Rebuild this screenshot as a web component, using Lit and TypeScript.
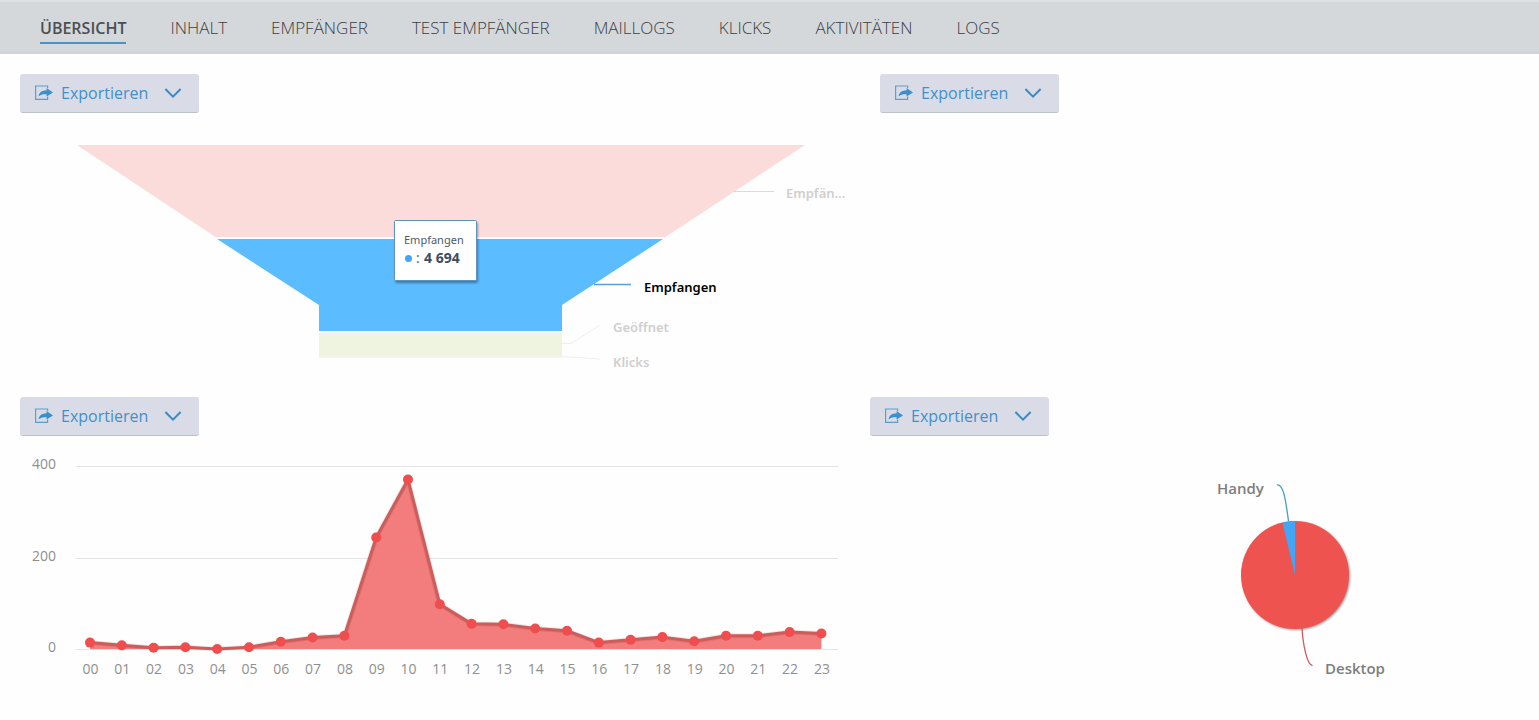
import { LitElement, html, svg, css } from "lit";
import { customElement, property } from "lit/decorators.js";

const TABS = [
  "ÜBERSICHT",
  "INHALT",
  "EMPFÄNGER",
  "TEST EMPFÄNGER",
  "MAILLOGS",
  "KLICKS",
  "AKTIVITÄTEN",
  "LOGS",
];

/** Opens per hour of the day, index = hour. */
const HOURLY = [
  14, 8, 3, 4, 0, 4, 16, 25, 29, 244, 371, 98, 55, 54, 45, 40, 14, 20, 26, 17, 29, 29, 37, 34,
];

@customElement("nav-tabs")
export class NavTabs extends LitElement {
  @property({ type: Number }) active = 0;

  static styles = css`
    :host {
      display: block;
    }
    .bar {
      display: flex;
      gap: 44px;
      box-sizing: border-box;
      height: 54px;
      padding: 14px 40px 0;
      background: #d4d8db;
      border-top: 2px solid #dbe1e4;
      border-bottom: 2px solid #d3d3d3;
    }
    .tab {
      height: 26px;
      line-height: 24px;
      font-size: 17px;
      font-weight: 300;
      color: #3c4044;
      text-decoration: none;
      white-space: nowrap;
    }
    .current {
      font-size: 16px;
      font-weight: 600;
      color: #4b4f53;
      border-bottom: 2px solid #4a92c6;
    }
  `;

  render() {
    return html`<nav class="bar">
      ${TABS.map(
        (t, i) => html`<a class="tab ${i === this.active ? "current" : ""}" href="#">${t}</a>`
      )}
    </nav>`;
  }
}

@customElement("export-button")
export class ExportButton extends LitElement {
  static styles = css`
    :host {
      display: block;
    }
    .button {
      display: flex;
      align-items: center;
      height: 39px;
      padding: 0 17px 0 15px;
      border: 0;
      border-bottom: 1px solid #bcc0c9;
      border-radius: 3px;
      background: #d9dce6;
      color: #4190cb;
      font: inherit;
      font-size: 16px;
      cursor: pointer;
    }
    .label {
      margin: 0 16px 0 8px;
    }
    .icon {
      display: block;
    }
  `;

  render() {
    return html`<button class="button" type="button">
      <svg class="icon" width="18" height="16" viewBox="0 0 18 16" fill="none">
        <path d="M12.6 3V1H0.6V14.4H12.6V11.4" stroke="#5a9fd2" stroke-width="1.2" />
        <path
          d="M3.6 11.2C4.2 7.4 6.8 5.4 11.6 5.3V3L18 7.4L11.6 11.4V9.2C8 9 5.6 9.6 3.6 11.2Z"
          fill="#3a8fcd"
        />
      </svg>
      <span class="label">Exportieren</span>
      <svg class="icon" width="18" height="12" viewBox="0 0 18 12" fill="none">
        <path d="M1.4 2L9 9.6L16.6 2" stroke="#3a8ac6" stroke-width="2" />
      </svg>
    </button>`;
  }
}

const chartStyles = css`
  :host {
    display: block;
  }
  .chart {
    display: block;
    width: 100%;
    height: auto;
  }
`;

@customElement("funnel-chart")
export class FunnelChart extends LitElement {
  static styles = [
    chartStyles,
    css`
      .label {
        font-family: "Noto Sans", "Open Sans", sans-serif;
        font-size: 13px;
        font-weight: 600;
        fill: #cfcfcf;
      }
      .selected {
        fill: #000;
      }
      .tip-box {
        fill: #fff;
        stroke: #5d93bd;
        filter: drop-shadow(1px 2px 1px rgba(0, 0, 0, 0.35));
      }
      .tip-title {
        font-family: "Noto Sans", "Open Sans", sans-serif;
        font-size: 11px;
        fill: #4c5a6a;
      }
      .tip-value {
        font-size: 14px;
        font-weight: 700;
        fill: #3d4c5e;
      }
      .tip-colon {
        font-size: 14px;
        fill: #4c5a6a;
      }
    `,
  ];

  render() {
    return html`<svg class="chart" viewBox="0 0 860 264" role="img" aria-label="Empfangen: 4 694">
      <polygon points="77,32 805,32 664,125 217,125" fill="#fcdbdb" />
      <polygon points="217,126 663,126 562,192 562,218 319,218 319,192" fill="#5bbcff" />
      <path d="M217 125H664" stroke="#fff" stroke-width="2" />
      <rect x="319" y="220" width="243" height="23" fill="#eef4e0" />
      <rect x="319" y="243" width="243" height="2" fill="#f4f4ea" />
      <g fill="none">
        <path d="M734 78.5H774" stroke="#f7cfcf" />
        <path d="M594 171.5H631" stroke="#5a9fd6" stroke-width="1.5" />
        <path d="M562 230.5H571L600 212" stroke="#eef0e8" />
        <path d="M562 243.5L600 246" stroke="#eeeeea" />
      </g>
      <text class="label" x="786" y="85">Empfän…</text>
      <text class="label selected" x="644" y="179">Empfangen</text>
      <text class="label" x="613" y="219">Geöffnet</text>
      <text class="label" x="613" y="254">Klicks</text>
      <rect class="tip-box" x="394.5" y="107.5" width="82" height="60" rx="1" />
      <text class="tip-title" x="404" y="131">Empfangen</text>
      <circle cx="408.5" cy="145.5" r="3.5" fill="#42a5f5" />
      <text class="tip-colon" x="416" y="150">:</text>
      <text class="tip-value" x="424" y="150">4 694</text>
    </svg>`;
  }
}

@customElement("hourly-chart")
export class HourlyChart extends LitElement {
  static styles = [
    chartStyles,
    css`
      .axis {
        font-size: 14px;
        fill: #8f8f8f;
      }
    `,
  ];

  private readonly base = 213;

  private x(i: number) {
    return 90 + i * 31.8;
  }

  private y(value: number) {
    return this.base - value * 0.457;
  }

  render() {
    const points = HOURLY.map((v, i) => `${this.x(i)},${this.y(v)}`).join(" ");
    const area = `${this.x(0)},${this.base} ${points} ${this.x(HOURLY.length - 1)},${this.base}`;
    return html`<svg class="chart" viewBox="0 0 850 264" role="img" aria-label="00 – 23">
      ${[400, 200, 0].map(
        (v) => svg`
          <path d="M76 ${Math.round(this.y(v)) + 0.5}H838" stroke="#e4e4e4" />
          <text class="axis" x="56" y="${Math.round(this.y(v)) + 3}" text-anchor="end">${v}</text>`
      )}
      <polygon points=${area} fill="#f27d7c" />
      <g fill="none" stroke-linejoin="round">
        <polyline points=${points} stroke="#000" stroke-opacity="0.08" stroke-width="5" />
        <polyline points=${points} stroke="#cd5c5b" stroke-width="3" />
      </g>
      ${HOURLY.map(
        (v, i) => svg`
          <circle cx="${this.x(i)}" cy="${this.y(v)}" r="5" fill="#f04e4e" />
          <text class="axis" x="${this.x(i) + 0.5}" y="238" text-anchor="middle">
            ${String(i).padStart(2, "0")}
          </text>`
      )}
    </svg>`;
  }
}

@customElement("device-chart")
export class DeviceChart extends LitElement {
  static styles = [
    chartStyles,
    css`
      .label {
        font-size: 15px;
        font-weight: 600;
        fill: #7d7d7d;
      }
      .pie {
        filter: drop-shadow(1px 1px 1px rgba(0, 0, 0, 0.4));
      }
    `,
  ];

  render() {
    return html`<svg class="chart" viewBox="0 0 689 264" role="img" aria-label="Desktop, Handy">
      <g class="pie">
        <circle cx="445" cy="139" r="54" fill="#ef5350" />
        <path d="M445 139L432.4 86.5A54 54 0 0 1 445 85Z" fill="#42a5f5" />
      </g>
      <g fill="none">
        <path d="M427 49C434 48 436 67 438.500 85" stroke="#459cc4" stroke-width="1.3" />
        <path d="M452 192C453 209 457 229 462.500 229.500" stroke="#cf5a5f" stroke-width="1.3" />
      </g>
      <text class="label" x="367" y="58">Handy</text>
      <text class="label" x="475" y="238">Desktop</text>
    </svg>`;
  }
}

@customElement("app-root")
export class AppRoot extends LitElement {
  static styles = css`
    :host {
      display: block;
      min-height: 100vh;
      background: #fefefe;
      font-family: "Open Sans", "Noto Sans", sans-serif;
    }
    .row {
      display: grid;
    }
    .summary {
      grid-template-columns: minmax(0, 860fr) minmax(0, 679fr);
    }
    .details {
      grid-template-columns: minmax(0, 850fr) minmax(0, 689fr);
    }
    .panel {
      padding-top: 20px;
    }
    .tools {
      display: flex;
      padding-left: 20px;
    }
  `;

  render() {
    const tools = html`<div class="tools"><export-button></export-button></div>`;
    return html`
      <nav-tabs></nav-tabs>
      <main>
        <div class="row summary">
          <section class="panel">${tools}<funnel-chart></funnel-chart></section>
          <section class="panel">${tools}</section>
        </div>
        <div class="row details">
          <section class="panel">${tools}<hourly-chart></hourly-chart></section>
          <section class="panel">${tools}<device-chart></device-chart></section>
        </div>
      </main>
    `;
  }
}
